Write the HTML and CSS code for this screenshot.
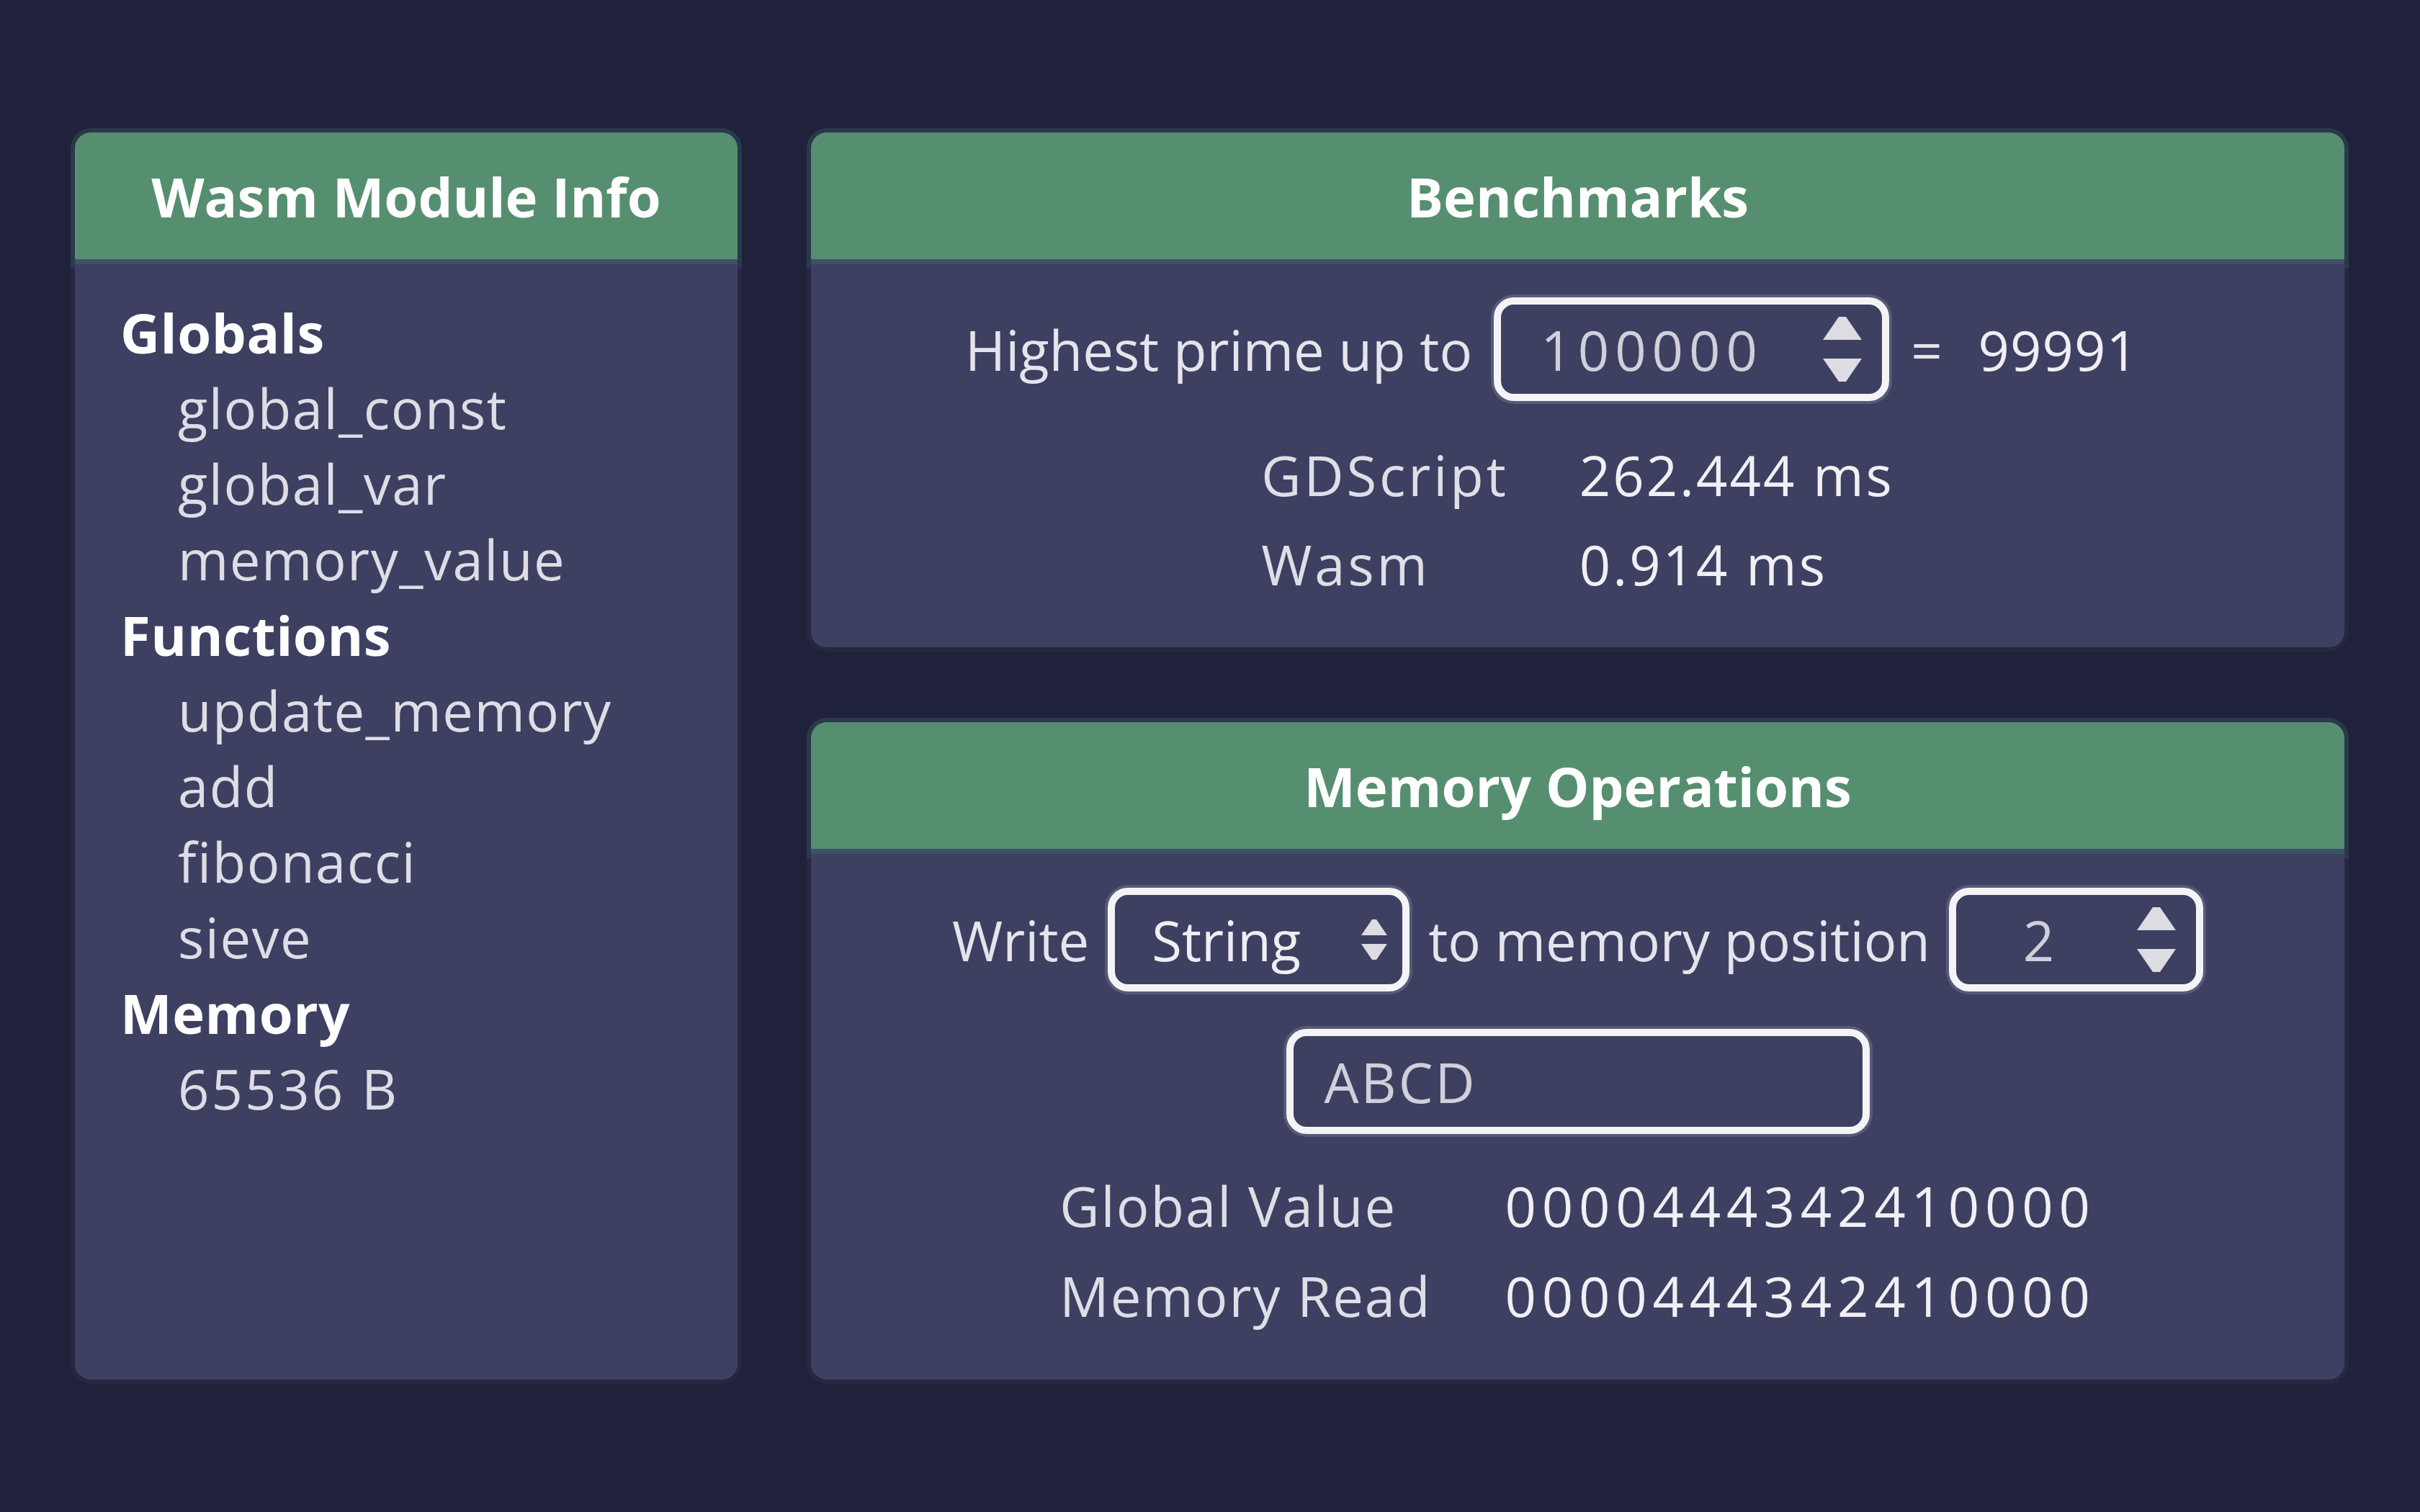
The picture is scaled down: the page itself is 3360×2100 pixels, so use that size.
FILE: index.html
```html
<!DOCTYPE html>
<html lang="en">
<head>
<meta charset="utf-8">
<title>Wasm Demo</title>
<link rel="stylesheet" href="styles.css">
</head>
<body>
<div class="app">
  <section class="panel panel-info">
    <header class="panel-head">Wasm Module Info</header>
    <div class="panel-body info-body">
      <div class="group">Globals</div>
      <div class="item">global_const</div>
      <div class="item">global_var</div>
      <div class="item">memory_value</div>
      <div class="group">Functions</div>
      <div class="item">update_memory</div>
      <div class="item">add</div>
      <div class="item">fibonacci</div>
      <div class="item">sieve</div>
      <div class="group">Memory</div>
      <div class="item num-small">65536 B</div>
    </div>
  </section>

  <div class="col">
    <section class="panel panel-bench">
      <header class="panel-head">Benchmarks</header>
      <div class="panel-body bench-body">
        <div class="row prime-row">
          <span class="lbl">Highest prime up to</span>
          <div class="box spin spin-wide">
            <span class="field num-wide">100000</span>
            <span class="spin-arrows">
              <svg width="54" height="32" viewBox="0 0 54 32"><polygon points="22,0 32,0 54,32 0,32"/></svg>
              <svg width="54" height="32" viewBox="0 0 54 32"><polygon points="0,0 54,0 32,32 22,32"/></svg>
            </span>
          </div>
          <span class="lbl eq">=</span>
          <span class="lbl result">99991</span>
        </div>
        <div class="grid bench-grid">
          <span class="glabel">GDScript</span><span class="gval">262.444 ms</span>
          <span class="glabel">Wasm</span><span class="gval">0.914 ms</span>
        </div>
      </div>
    </section>

    <section class="panel panel-mem">
      <header class="panel-head">Memory Operations</header>
      <div class="panel-body mem-body">
        <div class="row write-row">
          <span class="lbl">Write</span>
          <div class="box option">
            <span class="field opt-text">String</span>
            <span class="opt-arrows">
              <svg width="36" height="22" viewBox="0 0 36 22"><polygon points="15,0 21,0 36,22 0,22"/></svg>
              <svg width="36" height="22" viewBox="0 0 36 22"><polygon points="0,0 36,0 21,22 15,22"/></svg>
            </span>
          </div>
          <span class="lbl">to memory position</span>
          <div class="box spin spin-small">
            <span class="field">2</span>
            <span class="spin-arrows">
              <svg width="54" height="32" viewBox="0 0 54 32"><polygon points="22,0 32,0 54,32 0,32"/></svg>
              <svg width="54" height="32" viewBox="0 0 54 32"><polygon points="0,0 54,0 32,32 22,32"/></svg>
            </span>
          </div>
        </div>
        <div class="box line-edit"><span class="field abcd">ABCD</span></div>
        <div class="grid mem-grid">
          <span class="glabel">Global Value</span><span class="gval hex">0000444342410000</span>
          <span class="glabel">Memory Read</span><span class="gval hex">0000444342410000</span>
        </div>
      </div>
    </section>
  </div>
</div>
</body>
</html>
```

FILE: styles.css
```css
* { box-sizing: border-box; }

html, body {
  margin: 0;
  padding: 0;
}

body {
  width: 3360px;
  height: 2100px;
  overflow: hidden;
  background: #20213a;
  font-family: "Open Sans", "Noto Sans", sans-serif;
  font-size: 76px;
  font-weight: 400;
  color: #e4e4ec;
}

.app {
  display: flex;
  gap: 102px;
  height: 2100px;
  padding: 184px 105px 184px 104px;
}

.panel {
  display: flex;
  flex-direction: column;
  background: #3e4062;
  border-radius: 22px;
  box-shadow: 0 0 0 6px #262840;
}

.panel-info { width: 920px; }

.col {
  flex: 1;
  display: flex;
  flex-direction: column;
  gap: 104px;
}

.panel-mem { flex: 1; }

.panel-head {
  flex: none;
  height: 183px;
  display: flex;
  align-items: center;
  justify-content: center;
  background: #558f70;
  border-bottom: 7px solid #3d5068;
  border-radius: 22px 22px 0 0;
  box-shadow: 0 0 0 6px #2a384b;
  color: #ffffff;
  font-weight: 700;
  white-space: nowrap;
}

.panel-body {
  position: relative;
  z-index: 1;
  flex: 1;
  background: #3e4062;
  border-radius: 0 0 22px 22px;
}

/* left info list */
.info-body {
  padding: 42px 0 0 63px;
  line-height: 105px;
}

.group {
  color: #ffffff;
  font-weight: 700;
  letter-spacing: 0.5px;
}

.item {
  padding-left: 80px;
  color: #dddde6;
  letter-spacing: 1.5px;
}

.item.num-small { letter-spacing: 3px; }

/* rows */
.bench-body,
.mem-body {
  display: flex;
  flex-direction: column;
  align-items: center;
  padding: 46px 0 63px;
}

.mem-body { padding-top: 47px; }

.row {
  display: flex;
  align-items: center;
  white-space: nowrap;
}

.prime-row {
  height: 144px;
  gap: 30px;
  margin-bottom: 50px;
}

.write-row {
  height: 144px;
  gap: 26px;
  margin-bottom: 52px;
}

.lbl { color: #e4e4ec; }

.result {
  margin-left: 20px;
  margin-right: 72px;
  color: #eeeef3;
  letter-spacing: 1px;
}

.num-wide { letter-spacing: 8px; }

/* input boxes */
.box {
  flex: none;
  display: flex;
  align-items: center;
  height: 144px;
  border: 10px solid #f4f4f7;
  border-radius: 28px;
  box-shadow: 0 0 0 4px rgba(120, 122, 150, 0.45);
}

.field {
  color: #cfd0da;
  white-space: nowrap;
}

.spin .field {
  flex: 1;
  text-align: center;
}

.spin-wide .field { margin-right: 28px; }
.spin-small .field { margin-right: 22px; }

.spin-wide { width: 549px; padding-right: 28px; }
.spin-small { width: 353px; padding-right: 28px; }

.spin-arrows {
  display: flex;
  flex-direction: column;
  gap: 26px;
}

.spin-arrows svg,
.opt-arrows svg {
  display: block;
  fill: #dcdce2;
}

.option {
  width: 419px;
  padding: 0 21px 0 51px;
}

.opt-text {
  flex: 1;
  color: #eeeef3;
}

.opt-arrows {
  display: flex;
  flex-direction: column;
  gap: 12px;
}

.line-edit {
  width: 810px;
  height: 146px;
  padding-left: 43px;
  margin-bottom: 47px;
}

.abcd { letter-spacing: 3px; }

/* grids */
.grid {
  display: grid;
  grid-template-columns: auto auto;
  line-height: 105px;
  white-space: nowrap;
}

.bench-grid { row-gap: 19px; column-gap: 98px; }
.mem-grid { row-gap: 20px; column-gap: 102px; }

.glabel { color: #dedee7; }
.bench-grid .glabel { letter-spacing: 3.9px; }
.mem-grid .glabel { letter-spacing: 2px; }

.gval {
  color: #f0f0f4;
  letter-spacing: 3px;
}

.gval.hex { letter-spacing: 7.8px; }
```
